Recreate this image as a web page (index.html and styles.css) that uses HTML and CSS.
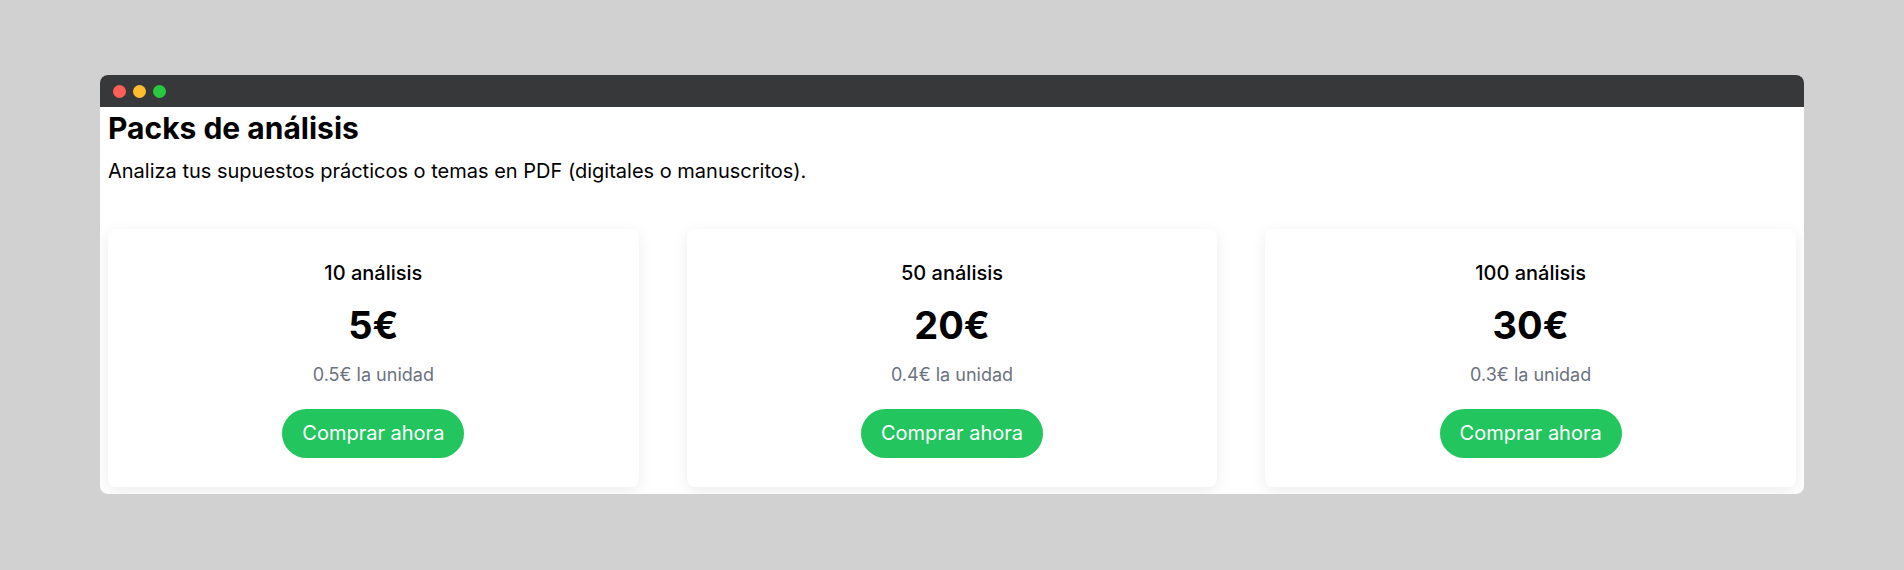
FILE: index.html
```html
<!DOCTYPE html>
<html lang="es">
<head>
<meta charset="utf-8">
<title>Packs de análisis</title>
<link rel="stylesheet" href="styles.css">
</head>
<body>
  <div class="window">
    <div class="titlebar">
      <span class="dot dot-red"></span>
      <span class="dot dot-yellow"></span>
      <span class="dot dot-green"></span>
    </div>
    <div class="content">
      <h1 class="title">Packs de análisis</h1>
      <p class="subtitle">Analiza tus supuestos prácticos o temas en PDF (digitales o manuscritos).</p>
      <div class="packs">
        <div class="card">
          <h3 class="card-name">10 análisis</h3>
          <div class="card-price">5€</div>
          <div class="card-unit">0.5€ la unidad</div>
          <button class="buy">Comprar ahora</button>
        </div>
        <div class="card">
          <h3 class="card-name">50 análisis</h3>
          <div class="card-price">20€</div>
          <div class="card-unit">0.4€ la unidad</div>
          <button class="buy">Comprar ahora</button>
        </div>
        <div class="card">
          <h3 class="card-name">100 análisis</h3>
          <div class="card-price">30€</div>
          <div class="card-unit">0.3€ la unidad</div>
          <button class="buy">Comprar ahora</button>
        </div>
      </div>
    </div>
  </div>
</body>
</html>
```

FILE: styles.css
```css
* { box-sizing: border-box; }

html, body {
  margin: 0;
  padding: 0;
  background: #d1d1d1;
}

body {
  padding: 75px 100px 0;
  font-family: Inter, "Noto Sans", "Liberation Sans", sans-serif;
  color: #000;
}

.window {
  background: #fff;
  border-radius: 8px;
  overflow: hidden;
}

.titlebar {
  height: 32px;
  background: #37383a;
  display: flex;
  align-items: center;
  gap: 7px;
  padding-left: 13px;
}

.dot {
  width: 13px;
  height: 13px;
  border-radius: 50%;
  display: block;
}
.dot-red { background: #ff5f57; }
.dot-yellow { background: #febc2e; }
.dot-green { background: #28c840; }

.content {
  padding: 1px 8px 7px;
}

.title {
  margin: 0;
  font-size: 30px;
  line-height: 40px;
  font-weight: 700;
}

.subtitle {
  margin: 9px 0 0;
  font-size: 20px;
  line-height: 28px;
}

.packs {
  margin-top: 44px;
  display: grid;
  grid-template-columns: repeat(3, 1fr);
  gap: 48px;
}

.card {
  background: #fff;
  border-radius: 8px;
  box-shadow: 0 4px 16px rgba(0, 0, 0, 0.08);
  padding: 30px 32px 29px;
  display: flex;
  flex-direction: column;
  align-items: center;
  text-align: center;
}

.card-name {
  margin: 0;
  font-size: 20px;
  line-height: 28px;
  font-weight: 500;
}

.card-price {
  margin-top: 18px;
  font-size: 38px;
  line-height: 40px;
  font-weight: 700;
}

.card-unit {
  margin-top: 16px;
  font-size: 18px;
  line-height: 28px;
  color: #6b7280;
}

.buy {
  margin-top: 20px;
  border: none;
  background: #22c55e;
  color: #fff;
  font-family: inherit;
  font-size: 20px;
  line-height: 29px;
  padding: 10px 20px;
  border-radius: 9999px;
  cursor: pointer;
}
```
